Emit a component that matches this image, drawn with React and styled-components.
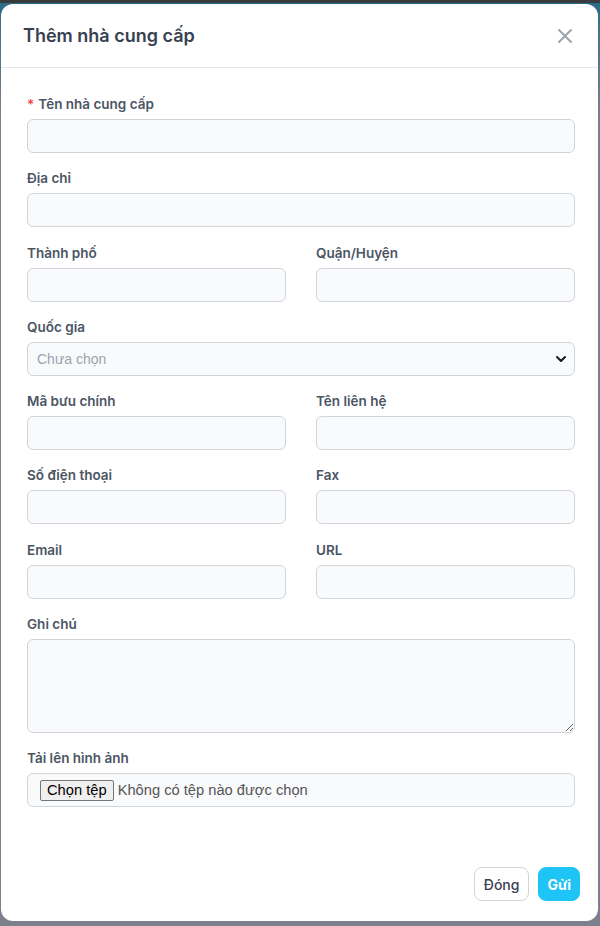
import React from "react";
import styled, { createGlobalStyle } from "styled-components";

const GlobalStyle = createGlobalStyle`
  html, body {
    margin: 0;
    padding: 0;
  }
  body {
    height: 926px;
    overflow: hidden;
    font-family: Inter, "Noto Sans", sans-serif;
    background: linear-gradient(
      to bottom,
      #3a3b3d 0px,
      #3a3b3d 3px,
      #2c6a88 3px,
      #4f7387 40px,
      #7b808c 120px,
      #7b808c 100%
    );
  }
`;

const Modal = styled.div`
  margin: 4px 0 0 1px;
  width: 597px;
  height: 917px;
  background: #fff;
  border-radius: 12px;
  display: flex;
  flex-direction: column;
  box-sizing: border-box;
`;

const Header = styled.div`
  height: 64px;
  display: flex;
  align-items: center;
  justify-content: space-between;
  padding: 0 24px 0 22px;
  border-bottom: 1px solid #e5e7eb;
  box-sizing: border-box;
`;

const Title = styled.h3`
  margin: 0;
  font-size: 18px;
  font-weight: 600;
  color: #374151;
`;

const CloseButton = styled.button`
  border: none;
  background: none;
  padding: 0;
  width: 18px;
  height: 18px;
  display: flex;
  align-items: center;
  justify-content: center;
  color: #9ca3af;
  cursor: pointer;
`;

const Body = styled.div`
  padding: 26px 23px 0 26px;
  flex: 1;
`;

const Row = styled.div`
  display: grid;
  grid-template-columns: 1fr 1fr;
  column-gap: 30px;
`;

const Field = styled.div`
  margin-bottom: 15.25px;
`;

const Label = styled.label`
  display: block;
  font-size: 13.5px;
  line-height: 20px;
  font-weight: 600;
  color: #4b5563;
  margin-bottom: 5px;
`;

const Star = styled.span`
  color: #ef4444;
  margin-right: 4px;
`;

const Input = styled.input`
  display: block;
  width: 100%;
  height: 34px;
  box-sizing: border-box;
  border: 1px solid #d1d5db;
  border-radius: 6px;
  background: #f9fafb;
  padding: 0 10px;
  font-size: 14px;
  font-family: "Liberation Sans", Arial, sans-serif;
  outline: none;
`;

const SelectWrap = styled.div`
  position: relative;
`;

const Select = styled.select`
  display: block;
  width: 100%;
  height: 34px;
  box-sizing: border-box;
  border: 1px solid #d1d5db;
  border-radius: 6px;
  background: #f9fafb;
  padding: 0 10px 0 9px;
  font-size: 14px;
  font-family: "Liberation Sans", Arial, sans-serif;
  color: #9ca3af;
  appearance: none;
  outline: none;
`;

const Chevron = styled.svg`
  position: absolute;
  right: 8px;
  top: 11px;
  pointer-events: none;
`;

const TextArea = styled.textarea`
  display: block;
  width: 100%;
  height: 94px;
  box-sizing: border-box;
  border: 1px solid #d1d5db;
  border-radius: 6px;
  background: #f9fafb;
  padding: 8px 10px;
  font-size: 14px;
  resize: vertical;
  outline: none;
`;

const FileBox = styled.div`
  height: 34px;
  box-sizing: border-box;
  border: 1px solid #d1d5db;
  border-radius: 6px;
  background: #f9fafb;
  display: flex;
  align-items: center;
  padding-left: 12px;
  gap: 4px;
  font-family: "Liberation Sans", Arial, sans-serif;
  font-size: 14.7px;
`;

const FileButton = styled.span`
  height: 21px;
  box-sizing: border-box;
  padding: 0 6px;
  border: 1px solid #767676;
  border-radius: 2px;
  background: #efefef;
  color: #000;
  display: flex;
  align-items: center;
  font-size: 14.7px;
`;

const FileText = styled.span`
  color: #555;
`;

const Footer = styled.div`
  display: flex;
  justify-content: flex-end;
  gap: 9px;
  padding: 0 18px 20px 0;
`;

const Button = styled.button`
  height: 34px;
  box-sizing: border-box;
  border-radius: 8px;
  font-family: Inter, "Noto Sans", sans-serif;
  font-size: 14px;
  padding: 0 ${(p) => (p.$primary ? "8px" : "9px")};
  border: 1px solid ${(p) => (p.$primary ? "#1ec4f5" : "#d1d5db")};
  background: ${(p) => (p.$primary ? "#1ec4f5" : "#fff")};
  color: ${(p) => (p.$primary ? "#fff" : "#374151")};
  font-weight: ${(p) => (p.$primary ? 700 : 500)};
  cursor: pointer;
`;

function TextField({ label, required }) {
  return (
    <Field>
      <Label>
        {required && <Star>*</Star>}
        {label}
      </Label>
      <Input type="text" />
    </Field>
  );
}

export default function App() {
  return (
    <>
      <GlobalStyle />
      <Modal>
        <Header>
          <Title>Thêm nhà cung cấp</Title>
          <CloseButton>
            <svg width="16" height="16" viewBox="0 0 16 16">
              <path
                d="M2 2L14 14M14 2L2 14"
                stroke="currentColor"
                strokeWidth="2"
                strokeLinecap="round"
              />
            </svg>
          </CloseButton>
        </Header>
        <Body>
          <TextField label="Tên nhà cung cấp" required />
          <TextField label="Địa chỉ" />
          <Row>
            <TextField label="Thành phố" />
            <TextField label="Quận/Huyện" />
          </Row>
          <Field>
            <Label>Quốc gia</Label>
            <SelectWrap>
              <Select defaultValue="">
                <option value="">Chưa chọn</option>
              </Select>
              <Chevron width="12" height="12" viewBox="0 0 12 12">
                <path
                  d="M2 4L6 8L10 4"
                  fill="none"
                  stroke="#111827"
                  strokeWidth="2"
                  strokeLinecap="round"
                  strokeLinejoin="round"
                />
              </Chevron>
            </SelectWrap>
          </Field>
          <Row>
            <TextField label="Mã bưu chính" />
            <TextField label="Tên liên hệ" />
          </Row>
          <Row>
            <TextField label="Số điện thoại" />
            <TextField label="Fax" />
          </Row>
          <Row>
            <TextField label="Email" />
            <TextField label="URL" />
          </Row>
          <Field>
            <Label>Ghi chú</Label>
            <TextArea />
          </Field>
          <Field>
            <Label>Tải lên hình ảnh</Label>
            <FileBox>
              <FileButton>Chọn tệp</FileButton>
              <FileText>Không có tệp nào được chọn</FileText>
            </FileBox>
          </Field>
        </Body>
        <Footer>
          <Button>Đóng</Button>
          <Button $primary>Gửi</Button>
        </Footer>
      </Modal>
    </>
  );
}
